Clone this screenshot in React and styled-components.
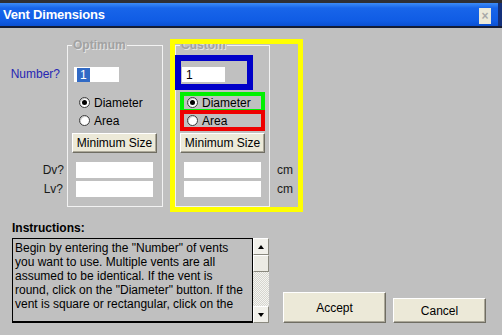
import React from "react";
import styled, { createGlobalStyle, css } from "styled-components";

const GlobalStyle = createGlobalStyle`
  html, body {
    margin: 0;
    padding: 0;
    background: #c0c0c0;
  }
  body {
    font-family: "Liberation Sans", Arial, sans-serif;
    font-size: 12px;
    color: #000;
  }
  * {
    box-sizing: border-box;
  }
`;

const Window = styled.div`
  width: 502px;
  height: 335px;
  overflow: hidden;
  background: #c0c0c0;
  display: flex;
  flex-direction: column;
`;

const TopEdge = styled.div`
  height: 3px;
  background: #2f2f33;
`;

const TitleBar = styled.div`
  height: 23px;
  display: flex;
  align-items: center;
  justify-content: space-between;
  padding: 0 7px 0 3px;
  background: linear-gradient(#3d8cf6, #1865ea 22%, #105ce4 78%, #0b50d2);
  border-right: 4px solid #14307a;
`;

const Title = styled.span`
  color: #fff;
  font-weight: bold;
  font-size: 13px;
  letter-spacing: -0.2px;
`;

const CloseBox = styled.span`
  width: 12px;
  height: 16px;
  margin-top: 2px;
  background: #ece9d8;
  color: #a8a8a8;
  display: flex;
  align-items: center;
  justify-content: center;
  font-size: 12px;
  font-weight: bold;
`;

const TitleRule = styled.div`
  height: 2px;
  background: #141c34;
`;

const Body = styled.div`
  flex: 1;
  display: flex;
  flex-direction: column;
  padding-top: 10px;
`;

const MainRow = styled.div`
  display: flex;
  align-items: flex-start;
`;

const LabelCol = styled.div`
  width: 67px;
  display: flex;
  flex-direction: column;
`;

const SideLabel = styled.div`
  height: ${(p) => p.$h}px;
  line-height: ${(p) => p.$h}px;
  margin-top: ${(p) => p.$top}px;
  padding-right: ${(p) => p.$pad}px;
  text-align: right;
  color: ${(p) => (p.$blue ? "#2626b4" : "#1a1a1a")};
`;

const Group = styled.fieldset`
  width: ${(p) => p.$w}px;
  margin: ${(p) => p.$mt || 0}px 0 0 0;
  padding: 0 0 9px 0;
  min-width: 0;
  border: 1px solid #f2f2f2;
  display: flex;
  flex-direction: column;
  align-items: flex-start;
`;

const Legend = styled.legend`
  margin-left: 4px;
  padding: 0 1px;
  font-weight: bold;
  font-size: 12px;
  line-height: 14px;
  color: #a2a2a2;
  text-shadow: 1px 1px 0 #e4e4e4;
`;

const NumberCell = styled.div`
  width: 66px;
  height: 23px;
  margin: 9px 0 0 5px;
  padding: 6px 0 0 1px;
  ${(p) =>
    p.$mark &&
    css`
      outline: 6px solid ${p.$mark};
    `}
`;

const Field = styled.div`
  width: ${(p) => p.$w}px;
  height: ${(p) => p.$h}px;
  margin: ${(p) => p.$mt || 0}px 0 0 ${(p) => p.$ml || 0}px;
  background: #fff;
  display: flex;
  align-items: center;
  padding-left: ${(p) => p.$pl || 3}px;
  font-size: 12px;
`;

const Selected = styled.span`
  background: #316ac5;
  color: #fff;
  padding: 0 3px;
  line-height: 14px;
`;

const RadioRow = styled.label`
  display: flex;
  align-items: center;
  gap: 4px;
  width: 79px;
  height: 15px;
  margin: ${(p) => p.$mt}px 0 0 7px;
  padding-left: 4px;
  ${(p) =>
    p.$mark &&
    css`
      outline: 4px solid ${p.$mark};
      outline-offset: -1px;
    `}
`;

const Radio = styled.input.attrs({ type: "radio" })`
  appearance: none;
  margin: 0;
  width: 11px;
  height: 11px;
  border-radius: 50%;
  border: 1px solid #3c3c3c;
  background: #fff;
  display: grid;
  place-content: center;
  box-shadow: inset 1px 1px 0 #d0d0d0;
  &:checked::after {
    content: "";
    width: 5px;
    height: 5px;
    border-radius: 50%;
    background: #000;
  }
`;

const Button = styled.button`
  width: ${(p) => p.$w}px;
  height: ${(p) => p.$h}px;
  margin: ${(p) => p.$mt || 0}px 0 0 ${(p) => p.$ml || 0}px;
  padding: 0;
  background: #ece9d8;
  border: 1px solid;
  border-color: #fff #6f6d62 #6f6d62 #fff;
  box-shadow: inset -1px -1px 0 #aca899;
  font: 12px "Liberation Sans", Arial, sans-serif;
  color: #000;
`;

const CustomFrame = styled.div`
  display: flex;
  align-items: flex-start;
  margin: 6px 0 0 12px;
  outline: 5px solid #ffff00;
`;

const UnitCol = styled.div`
  width: 28px;
  display: flex;
  flex-direction: column;
  gap: 3px;
  padding: 118px 0 0 7px;
  color: #1a1a1a;
`;

const Unit = styled.div`
  height: 16px;
  line-height: 16px;
`;

const BottomRow = styled.div`
  display: flex;
  align-items: flex-end;
  margin-top: 14px;
  padding-left: 12px;
`;

const InstructionsCol = styled.div`
  display: flex;
  flex-direction: column;
`;

const Heading = styled.div`
  height: 14px;
  line-height: 14px;
  margin-bottom: 3px;
  font-weight: bold;
`;

const TextRow = styled.div`
  display: flex;
`;

const TextBox = styled.div`
  width: 241px;
  height: 85px;
  border: 1px solid #000;
  border-bottom-width: 2px;
  padding: 2px 0 0 2px;
  line-height: 14px;
  white-space: nowrap;
  overflow: hidden;
`;

const Scrollbar = styled.div`
  width: 16px;
  height: 85px;
  display: flex;
  flex-direction: column;
`;

const ScrollButton = styled.div`
  height: 17px;
  background: #f1f0ea;
  border: 1px solid;
  border-color: #fff #8a897f #8a897f #fff;
  display: flex;
  align-items: center;
  justify-content: center;
  &::before {
    content: "";
    border-left: 3px solid transparent;
    border-right: 3px solid transparent;
    ${(p) =>
      p.$down
        ? css`
            border-top: 4px solid #000;
          `
        : css`
            border-bottom: 4px solid #000;
          `}
  }
`;

const Thumb = styled.div`
  height: 17px;
  background: #ecebe4;
  border: 1px solid;
  border-color: #fff #8a897f #8a897f #fff;
`;

const Track = styled.div`
  flex: 1;
  background: repeating-conic-gradient(#f4f4f0 0 25%, #d6d5cf 0 50%) 0 0 / 2px 2px;
`;

const ButtonRow = styled.div`
  display: flex;
  align-items: flex-end;
  gap: 7px;
  margin-left: 14px;
`;

function Column({ name, custom }) {
  return (
    <Group $w={custom ? 95 : 96} $mt={custom ? -6 : 0}>
      <Legend>{name}</Legend>
      <NumberCell $mark={custom ? "#0000c8" : null}>
        <Field $w={custom ? 43 : 45} $h={15} $pl={custom ? 4 : 0}>
          {custom ? "1" : <Selected>1</Selected>}
        </Field>
      </NumberCell>
      <RadioRow $mt={11} $mark={custom ? "#00f000" : null}>
        <Radio name={name} defaultChecked />
        Diameter
      </RadioRow>
      <RadioRow $mt={3} $mark={custom ? "#ee0000" : null}>
        <Radio name={name} />
        Area
      </RadioRow>
      <Button $w={85} $h={20} $mt={5} $ml={4}>
        Minimum Size
      </Button>
      <Field $w={77} $h={16} $mt={9} $ml={8} />
      <Field $w={77} $h={16} $mt={3} $ml={8} />
    </Group>
  );
}

export default function App() {
  return (
    <>
      <GlobalStyle />
      <Window>
        <TopEdge />
        <TitleBar>
          <Title>Vent Dimensions</Title>
          <CloseBox>×</CloseBox>
        </TitleBar>
        <TitleRule />
        <Body>
          <MainRow>
            <LabelCol>
              <SideLabel $h={15} $top={29} $pad={7} $blue>
                Number?
              </SideLabel>
              <SideLabel $h={16} $top={80} $pad={3}>
                Dv?
              </SideLabel>
              <SideLabel $h={16} $top={3} $pad={4}>
                Lv?
              </SideLabel>
            </LabelCol>
            <Column name="Optimum" />
            <CustomFrame>
              <Column name="Custom" custom />
              <UnitCol>
                <Unit>cm</Unit>
                <Unit>cm</Unit>
              </UnitCol>
            </CustomFrame>
          </MainRow>
          <BottomRow>
            <InstructionsCol>
              <Heading>Instructions:</Heading>
              <TextRow>
                <TextBox>
                  Begin by entering the "Number" of vents
                  <br />
                  you want to use. Multiple vents are all
                  <br />
                  assumed to be identical. If the vent is
                  <br />
                  round, click on the "Diameter" button. If the
                  <br />
                  vent is square or rectangular, click on the
                </TextBox>
                <Scrollbar>
                  <ScrollButton />
                  <Thumb />
                  <Track />
                  <ScrollButton $down />
                </Scrollbar>
              </TextRow>
            </InstructionsCol>
            <ButtonRow>
              <Button $w={103} $h={31}>
                Accept
              </Button>
              <Button $w={93} $h={25}>
                Cancel
              </Button>
            </ButtonRow>
          </BottomRow>
        </Body>
      </Window>
    </>
  );
}
